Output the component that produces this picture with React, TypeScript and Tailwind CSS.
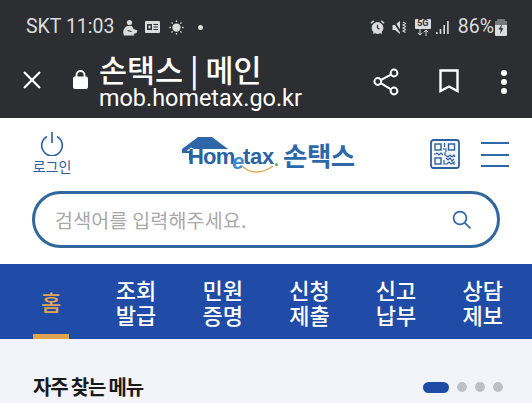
const font = "font-['Noto_Sans_CJK_KR','Noto_Sans',sans-serif]";

const tabs = [
  ["조회", "발급"],
  ["민원", "증명"],
  ["신청", "제출"],
  ["신고", "납부"],
  ["상담", "제보"],
];

function StatusBar() {
  return (
    <div className="flex h-[52px] items-center justify-between pl-[26px] pr-[25px] pt-[2px] text-[#dcdcdc]">
      <div className="flex items-center">
        <span className="font-['Roboto',sans-serif] text-[19.5px] leading-none">SKT 11:03</span>
        <svg width="15" height="17" viewBox="0 0 15 17" className="ml-[9px]" fill="#dcdcdc">
          <circle cx="6.5" cy="3.6" r="2.6" />
          <path d="M4 7h5l1.5 3 4 1.5-1 2.5-3 1 1 1.5H1c-1.5-3-1-7 3-9.5z" />
          <path d="M4.5 11.5l4 1" stroke="#2d2e31" />
        </svg>
        <svg width="15" height="12" viewBox="0 0 15 12" className="ml-[7px]">
          <rect width="15" height="12" rx="1" fill="#dcdcdc" />
          <rect x="2" y="3" width="5" height="6" fill="#2d2e31" />
          <rect x="3.5" y="4.5" width="2" height="3" fill="#dcdcdc" />
          <path d="M8.5 3.5h4.5M8.5 6h4.5M8.5 8.5h4.5" stroke="#2d2e31" />
        </svg>
        <svg width="15" height="15" viewBox="0 0 16 16" className="ml-[9px]" stroke="#dcdcdc" fill="#dcdcdc">
          <circle cx="8" cy="8" r="4.4" stroke="none" />
          <path d="M8 0.5v1.6M8 13.9v1.6M0.5 8h1.6M13.9 8h1.6M2.7 2.7l1.2 1.2M12.1 12.1l1.2 1.2M2.7 13.3l1.2-1.2M12.1 3.9l1.2-1.2" strokeWidth="1.4" />
        </svg>
        <span className="ml-[14px] h-[5px] w-[5px] rounded-full bg-[#dcdcdc]" />
      </div>
      <div className="flex items-center">
        <svg width="15" height="16" viewBox="0 0 16 16" fill="none" stroke="#dcdcdc">
          <circle cx="8" cy="9" r="5.8" fill="#dcdcdc" />
          <path d="M8 5.5V9l2.2 1.4" stroke="#2d2e31" strokeWidth="1.3" />
          <path d="M1 4l3-2.6M15 4l-3-2.6M3.5 15l1.5-1.5M12.5 15L11 13.5" strokeWidth="1.6" />
        </svg>
        <svg width="15" height="15" viewBox="0 0 15 15" className="ml-[7px]" fill="#dcdcdc" stroke="#dcdcdc">
          <path d="M0.5 5h2.5l5-4v13l-5-4H0.5z" stroke="none" />
          <path d="M1.5 1l8.5 13" stroke="#2d2e31" strokeWidth="1.8" />
          <path d="M11 2l2.5 1.5L11 5l2.5 1.5L11 8l2.5 1.5L11 11l2.5 1.5" fill="none" strokeWidth="1.1" />
        </svg>
        <div className="ml-[8px] flex w-[16px] flex-col items-center">
          <span className="flex h-[10px] w-[16px] items-center justify-center rounded-[1px] bg-[#dcdcdc] font-['Roboto',sans-serif] text-[9px] font-bold leading-none text-[#2d2e31]">
            5G
          </span>
          <svg width="14" height="7" viewBox="0 0 14 7" stroke="#dcdcdc" fill="none">
            <path d="M4 0v6M1.8 3.8L4 6l2.2-2.2M10 7V1M7.8 3.2L10 1l2.2 2.2" />
          </svg>
        </div>
        <svg width="14" height="15" viewBox="0 0 14 15" className="ml-[5px]" fill="#dcdcdc">
          <rect x="0" y="12" width="1.6" height="2" />
          <rect x="3.7" y="9" width="1.6" height="5" />
          <rect x="7.4" y="5" width="1.6" height="9" />
          <rect x="11.1" y="1" width="1.6" height="13" />
        </svg>
        <span className="ml-[8px] font-['Roboto',sans-serif] text-[19.5px] leading-none">86%</span>
        <svg width="12" height="17" viewBox="0 0 12 17" className="ml-[1px]">
          <rect x="0" y="2" width="12" height="15" rx="1" fill="#dcdcdc" />
          <rect x="2" y="0" width="8" height="6" rx="1" fill="#77787a" />
          <rect x="0" y="2" width="12" height="4" fill="#77787a" />
          <path d="M7 5L3.5 10.5h2.3L5 15l3.5-5.8H6.2z" fill="#2d2e31" />
        </svg>
      </div>
    </div>
  );
}

function BrowserBar() {
  return (
    <div className="flex h-[66px] items-start text-white">
      <svg width="20" height="20" viewBox="0 0 20 20" className="ml-[22px] mt-[18px]" stroke="#fff" strokeWidth="2.2">
        <path d="M2 2l16 16M18 2L2 18" />
      </svg>
      <svg width="15" height="19" viewBox="0 0 15 19" className="ml-[31px] mt-[18px]" fill="#fff">
        <rect x="0" y="6.5" width="15" height="12.5" rx="2" />
        <path d="M3.5 7V5a4 4 0 0 1 8 0v2" fill="none" stroke="#fff" strokeWidth="1.8" />
      </svg>
      <div className="ml-[11px] mt-[2px] flex w-[203px] flex-col">
        <span className={`${font} h-[31px] whitespace-nowrap text-[30.5px] font-medium leading-[31px]`}>손택스 | 메인</span>
        <span className="whitespace-nowrap font-['Roboto',sans-serif] text-[23.4px] leading-[26px]">mob.hometax.go.kr</span>
      </div>
      <svg width="26" height="28" viewBox="0 0 26 28" className="ml-[71px] mt-[16px]" fill="none" stroke="#fff" strokeWidth="2">
        <circle cx="21" cy="5" r="3.4" />
        <circle cx="4.8" cy="13.5" r="3.4" />
        <circle cx="21" cy="23" r="3.4" />
        <path d="M18 6.7L7.8 12M7.8 15.2L18 21.3" />
      </svg>
      <svg width="20" height="24" viewBox="0 0 20 24" className="ml-[40px] mt-[17px]" fill="none" stroke="#fff" strokeWidth="2.4">
        <path d="M1.5 1.5h17v20.5L10 17.5 1.5 22z" />
      </svg>
      <div className="ml-[42px] mt-[18px] flex flex-col gap-[3.5px]">
        <span className="h-[5.5px] w-[5.5px] rounded-full bg-white" />
        <span className="h-[5.5px] w-[5.5px] rounded-full bg-white" />
        <span className="h-[5.5px] w-[5.5px] rounded-full bg-white" />
      </div>
    </div>
  );
}

function Logo() {
  return (
    <div className="relative h-[40px] w-[176px]">
      <svg width="50" height="24" viewBox="0 0 50 24" className="absolute left-0 top-[5px]" fill="#2e66a8">
        <path d="M1 12L17 0h14l16 12H13l-3-1.5L5.5 14H10v9H8v-7H1z" />
      </svg>
      <span className="absolute left-[7px] top-[10px] font-['Liberation_Sans',sans-serif] text-[22px] font-bold leading-[30px] tracking-[-0.8px] text-[#2a62a3]">
        Hom
      </span>
      <span className="absolute left-[51px] top-[15px] font-['Liberation_Sans',sans-serif] text-[22px] font-bold italic leading-[30px] text-[#3b8fd0]">
        e
      </span>
      <span className="absolute left-[62px] top-[10px] font-['Liberation_Sans',sans-serif] text-[22px] font-bold leading-[30px] tracking-[-0.3px] text-[#2a62a3]">
        tax
      </span>
      <span className="absolute left-[94px] top-[31px] h-[3px] w-[3px] rounded-full bg-[#6fa84f]" />
      <svg width="34" height="9" viewBox="0 0 34 9" className="absolute left-[60px] top-[33px]" fill="none">
        <path d="M1 1c8 8 20 8 31 0" stroke="#e0a94e" strokeWidth="1.4" />
      </svg>
      <span className={`${font} absolute left-[102px] top-[7px] whitespace-nowrap text-[26.5px] font-bold leading-[32px] tracking-[-0.5px] text-[#2f68a9]`}>
        손택스
      </span>
    </div>
  );
}

function QrIcon() {
  return (
    <svg width="30" height="30" viewBox="0 0 30 30" fill="none" stroke="#2f5f9f">
      <rect x="1" y="1" width="28" height="28" rx="2.5" strokeWidth="1.8" fill="#f4f7fb" />
      <rect x="5" y="5" width="6" height="6" strokeWidth="1.4" />
      <rect x="18.5" y="5" width="6" height="6" strokeWidth="1.4" />
      <rect x="5" y="19" width="6" height="6" strokeWidth="1.4" />
      <path d="M14.5 4v4M13 10h3v3M4 15h2l1-1 2 2 2-2 2 2M15 13v3l3 2 2-2 2 2 2-2 1 2M16 19l2 2 2-2 2 3 2-2M14 21v4h3l2-2 2 2 3-2v3" strokeWidth="1.2" />
    </svg>
  );
}

function Header() {
  return (
    <div className="flex h-[73px] items-start bg-white">
      <div className="ml-[32px] mt-[13px] flex w-[40px] flex-col items-center">
        <svg width="24" height="25" viewBox="0 0 24 25" fill="none" stroke="#2f68a9" strokeWidth="1.7">
          <path d="M7 5.5a10.3 10.3 0 1 0 10 0" />
          <path d="M12 1v11" />
        </svg>
        <span className={`${font} mt-[1px] whitespace-nowrap text-[14px] leading-[18px] text-[#2f5f9f]`}>로그인</span>
      </div>
      <div className="ml-[109px] mt-[14px]">
        <Logo />
      </div>
      <div className="ml-[73px] mt-[21px]">
        <QrIcon />
      </div>
      <div className="ml-[21px] mt-[24px] flex h-[25px] w-[28px] flex-col justify-between">
        <span className="h-[2px] bg-[#2f68a9]" />
        <span className="h-[2px] bg-[#2f68a9]" />
        <span className="h-[2px] bg-[#2f68a9]" />
      </div>
    </div>
  );
}

function SearchBar() {
  return (
    <div className="h-[73px] bg-white pl-[32px] pr-[32px]">
      <div className="flex h-[57px] items-center justify-between rounded-full border-[3px] border-[#31669f] pl-[20px] pr-[25px]">
        <span className={`${font} text-[19.5px] tracking-[0.2px] text-[#a9a9a9]`}>검색어를 입력해주세요.</span>
        <svg width="20" height="20" viewBox="0 0 20 20" fill="none" stroke="#2f68a9" strokeWidth="1.7">
          <circle cx="8" cy="8" r="6.4" />
          <path d="M12.8 12.8l5.6 5.6" />
        </svg>
      </div>
    </div>
  );
}

function TabBar() {
  return (
    <div className={`${font} flex h-[75px] items-stretch bg-[#204ba6] pl-[33px] text-[22px] font-medium leading-[25px] text-white`}>
      <div className="flex w-[36px] flex-col items-center justify-between">
        <span className="mt-[25px] text-[#e0a552]">홈</span>
        <span className="h-[5px] w-full bg-[#e0a552]" />
      </div>
      <div className="ml-[47px] flex w-[400px] gap-[46.7px]">
        {tabs.map(([top, bottom]) => (
          <div key={top} className="flex w-[40px] items-center justify-center whitespace-nowrap text-center">
            <span>
              {top}
              <br />
              {bottom}
            </span>
          </div>
        ))}
      </div>
    </div>
  );
}

export default function App() {
  return (
    <div className="h-[403px] w-[532px] overflow-hidden bg-[#f2f4f9]">
      <div className="bg-[#2d2e31]">
        <StatusBar />
        <BrowserBar />
      </div>
      <Header />
      <SearchBar />
      <TabBar />
      <div className="flex items-center justify-between pl-[33px] pr-[29px] pt-[33px]">
        <h2 className={`${font} text-[20px] font-bold leading-[30px] tracking-[-1.2px] text-[#1a1a1a]`}>자주 찾는 메뉴</h2>
        <div className="flex items-center gap-[8px]">
          <span className="h-[11px] w-[26px] rounded-full bg-[#204ba6]" />
          <span className="h-[10px] w-[10px] rounded-full bg-[#bfc0c5]" />
          <span className="h-[10px] w-[10px] rounded-full bg-[#bfc0c5]" />
          <span className="h-[10px] w-[10px] rounded-full bg-[#bfc0c5]" />
        </div>
      </div>
    </div>
  );
}
